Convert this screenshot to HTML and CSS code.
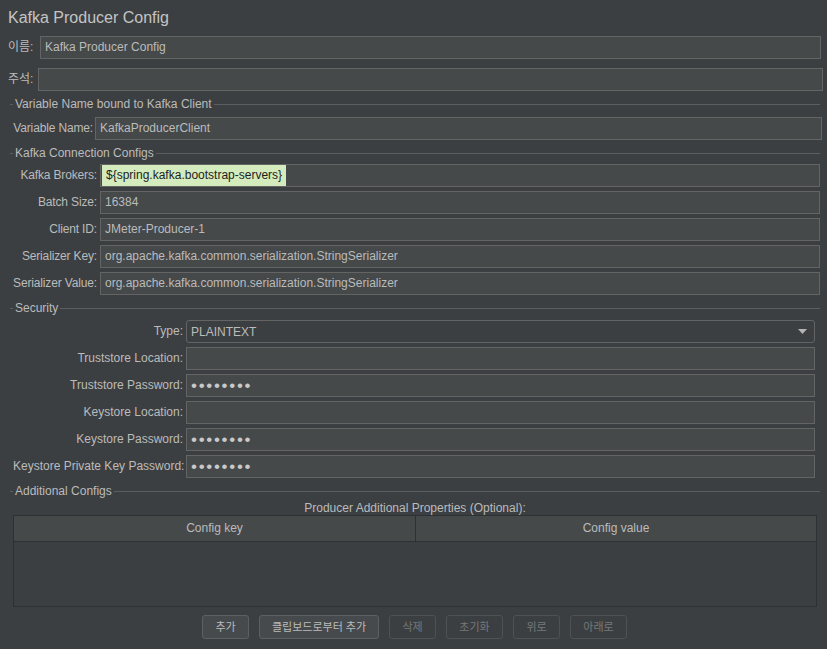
FILE: index.html
```html
<!DOCTYPE html>
<html>
<head>
<meta charset="utf-8">
<link rel="stylesheet" href="styles.css">
</head>
<body>
<div class="page">
  <div class="title">Kafka Producer Config</div>

  <div class="row row-name">
    <span class="lbl">이름:</span>
    <div class="field">Kafka Producer Config</div>
  </div>
  <div class="row row-comment">
    <span class="lbl">주석:</span>
    <div class="field"></div>
  </div>

  <div class="section s1"><span class="dash"></span><span class="stext">Variable Name bound to Kafka Client</span><span class="sline"></span></div>
  <div class="grid g-var">
    <span class="lbl r">Variable Name:</span>
    <div class="field">KafkaProducerClient</div>
  </div>

  <div class="section s2"><span class="dash"></span><span class="stext">Kafka Connection Configs</span><span class="sline"></span></div>
  <div class="grid g-conn">
    <span class="lbl r">Kafka Brokers:</span>
    <div class="field hl-field"><span class="hl">${spring.kafka.bootstrap-servers}</span></div>
    <span class="lbl r">Batch Size:</span>
    <div class="field">16384</div>
    <span class="lbl r">Client ID:</span>
    <div class="field">JMeter-Producer-1</div>
    <span class="lbl r">Serializer Key:</span>
    <div class="field">org.apache.kafka.common.serialization.StringSerializer</div>
    <span class="lbl r">Serializer Value:</span>
    <div class="field">org.apache.kafka.common.serialization.StringSerializer</div>
  </div>

  <div class="section s3"><span class="dash"></span><span class="stext">Security</span><span class="sline"></span></div>
  <div class="grid g-sec">
    <span class="lbl r">Type:</span>
    <div class="combo"><span>PLAINTEXT</span><svg class="arrow" width="9" height="5" viewBox="0 0 9 5"><polygon points="0,0 9,0 4.5,5" fill="#b4b4b4"/></svg></div>
    <span class="lbl r">Truststore Location:</span>
    <div class="field"></div>
    <span class="lbl r">Truststore Password:</span>
    <div class="field pw">••••••••</div>
    <span class="lbl r">Keystore Location:</span>
    <div class="field"></div>
    <span class="lbl r">Keystore Password:</span>
    <div class="field pw">••••••••</div>
    <span class="lbl r">Keystore Private Key Password:</span>
    <div class="field pw">••••••••</div>
  </div>

  <div class="section s4"><span class="dash"></span><span class="stext">Additional Configs</span><span class="sline"></span></div>
  <div class="caption">Producer Additional Properties (Optional):</div>
  <div class="table">
    <div class="thead">
      <div class="th th-left">Config key</div>
      <div class="th">Config value</div>
    </div>
    <div class="tbody"></div>
  </div>

  <div class="buttons">
    <div class="btn w47">추가</div>
    <div class="btn w120">클립보드로부터 추가</div>
    <div class="btn dis w47">삭제</div>
    <div class="btn dis w57">초기화</div>
    <div class="btn dis w47">위로</div>
    <div class="btn dis w57">아래로</div>
  </div>
</div>
</body>
</html>
```

FILE: styles.css
```css
html, body {
  margin: 0;
  padding: 0;
  background: #3c3f41;
}
body {
  font-family: "Liberation Sans", Arial, "Noto Sans CJK KR", sans-serif;
  font-size: 12px;
  color: #bbbbbb;
}
.page {
  width: 827px;
  height: 649px;
  overflow: hidden;
  display: flex;
  flex-direction: column;
}
.title {
  font-size: 16px;
  line-height: 20px;
  padding: 8px 8px 8px 8px;
  color: #c4c4c4;
}
.row {
  display: flex;
  align-items: center;
  height: 23px;
}
.row-name {
  padding-left: 8px;
  padding-right: 6px;
  margin-bottom: 9px;
}
.row-name .lbl { width: 32px; }
.row-comment {
  padding-left: 8px;
  padding-right: 4px;
}
.row-comment .lbl { width: 30px; }
.lbl {
  white-space: nowrap;
  line-height: 23px;
  color: #bbbbbb;
}
.lbl.r { text-align: right; }
.g-var .lbl, .g-conn .lbl { letter-spacing: -0.15px; }
.field {
  flex: 1;
  height: 21px;
  line-height: 21px;
  border: 1px solid #646464;
  background: #45494a;
  padding: 0 4px;
  color: #bbbbbb;
  white-space: nowrap;
  overflow: hidden;
  box-sizing: content-box;
}
.grid .field { flex: none; }
.hl-field { padding: 0 0 0 1px; }
.hl {
  display: inline-block;
  background: #d3ebbd;
  color: #1e1e1e;
  height: 21px;
  line-height: 21px;
  padding: 0 4px;
}
.pw {
  font-size: 17px;
  letter-spacing: 1.7px;
  color: #c8c8c8;
}
.section {
  display: flex;
  align-items: center;
  height: 16px;
  line-height: 16px;
  padding-left: 10px;
  padding-right: 7px;
}
.dash {
  width: 3px;
  height: 1px;
  background: #5b5e60;
  margin-right: 2px;
}
.sline {
  flex: 1;
  height: 1px;
  background: #5b5e60;
  margin-left: 2px;
}
.stext { color: #bbbbbb; }
.s1 { margin-top: 5px; }
.s2 { margin-top: 5px; }
.s3 { margin-top: 5px; }
.s4 { margin-top: 5px; }
.grid {
  display: grid;
  row-gap: 4px;
  column-gap: 3px;
  padding-left: 13px;
}
.g-var {
  grid-template-columns: 80px 1fr;
  column-gap: 2px;
  padding-right: 5px;
  margin-top: 5px;
}
.g-conn {
  grid-template-columns: 84px 1fr;
  padding-right: 7px;
  margin-top: 3px;
}
.g-sec {
  grid-template-columns: 170px 1fr;
  padding-right: 12px;
  margin-top: 4px;
}
.combo {
  height: 21px;
  border: 1px solid #646464;
  border-radius: 3px;
  background: #3c3f41;
  display: flex;
  align-items: center;
  justify-content: space-between;
  padding: 0 7px 0 4px;
  color: #bbbbbb;
}
.arrow { display: block; }
.caption {
  text-align: center;
  line-height: 14px;
  margin-top: 2px;
  padding-left: 3px;
}
.table {
  margin: 0 10px 0 13px;
  height: 92px;
  border: 1px solid #2e3133;
  box-sizing: border-box;
  display: flex;
  flex-direction: column;
}
.thead {
  display: flex;
  height: 26px;
  background: #45494a;
  border-bottom: 1px solid #2e3133;
  box-sizing: border-box;
}
.th {
  flex: 1;
  text-align: center;
  line-height: 25px;
  color: #bbbbbb;
}
.th-left {
  flex: none;
  width: 401px;
  border-right: 1px solid #2e3133;
}
.tbody { flex: 1; }
.buttons {
  display: flex;
  justify-content: center;
  gap: 10px;
  margin-top: 8px;
  padding-left: 2px;
}
.btn {
  height: 24px;
  line-height: 22px;
  border: 1px solid #5e6060;
  border-radius: 3px;
  background: #464a4c;
  color: #bbbbbb;
  font-size: 11px;
  text-align: center;
  box-sizing: border-box;
}
.w47 { width: 47px; }
.w57 { width: 57px; }
.w120 { width: 120px; }
.btn.dis {
  background: #3c3f41;
  border-color: #4f5254;
  color: #75787a;
}
```
